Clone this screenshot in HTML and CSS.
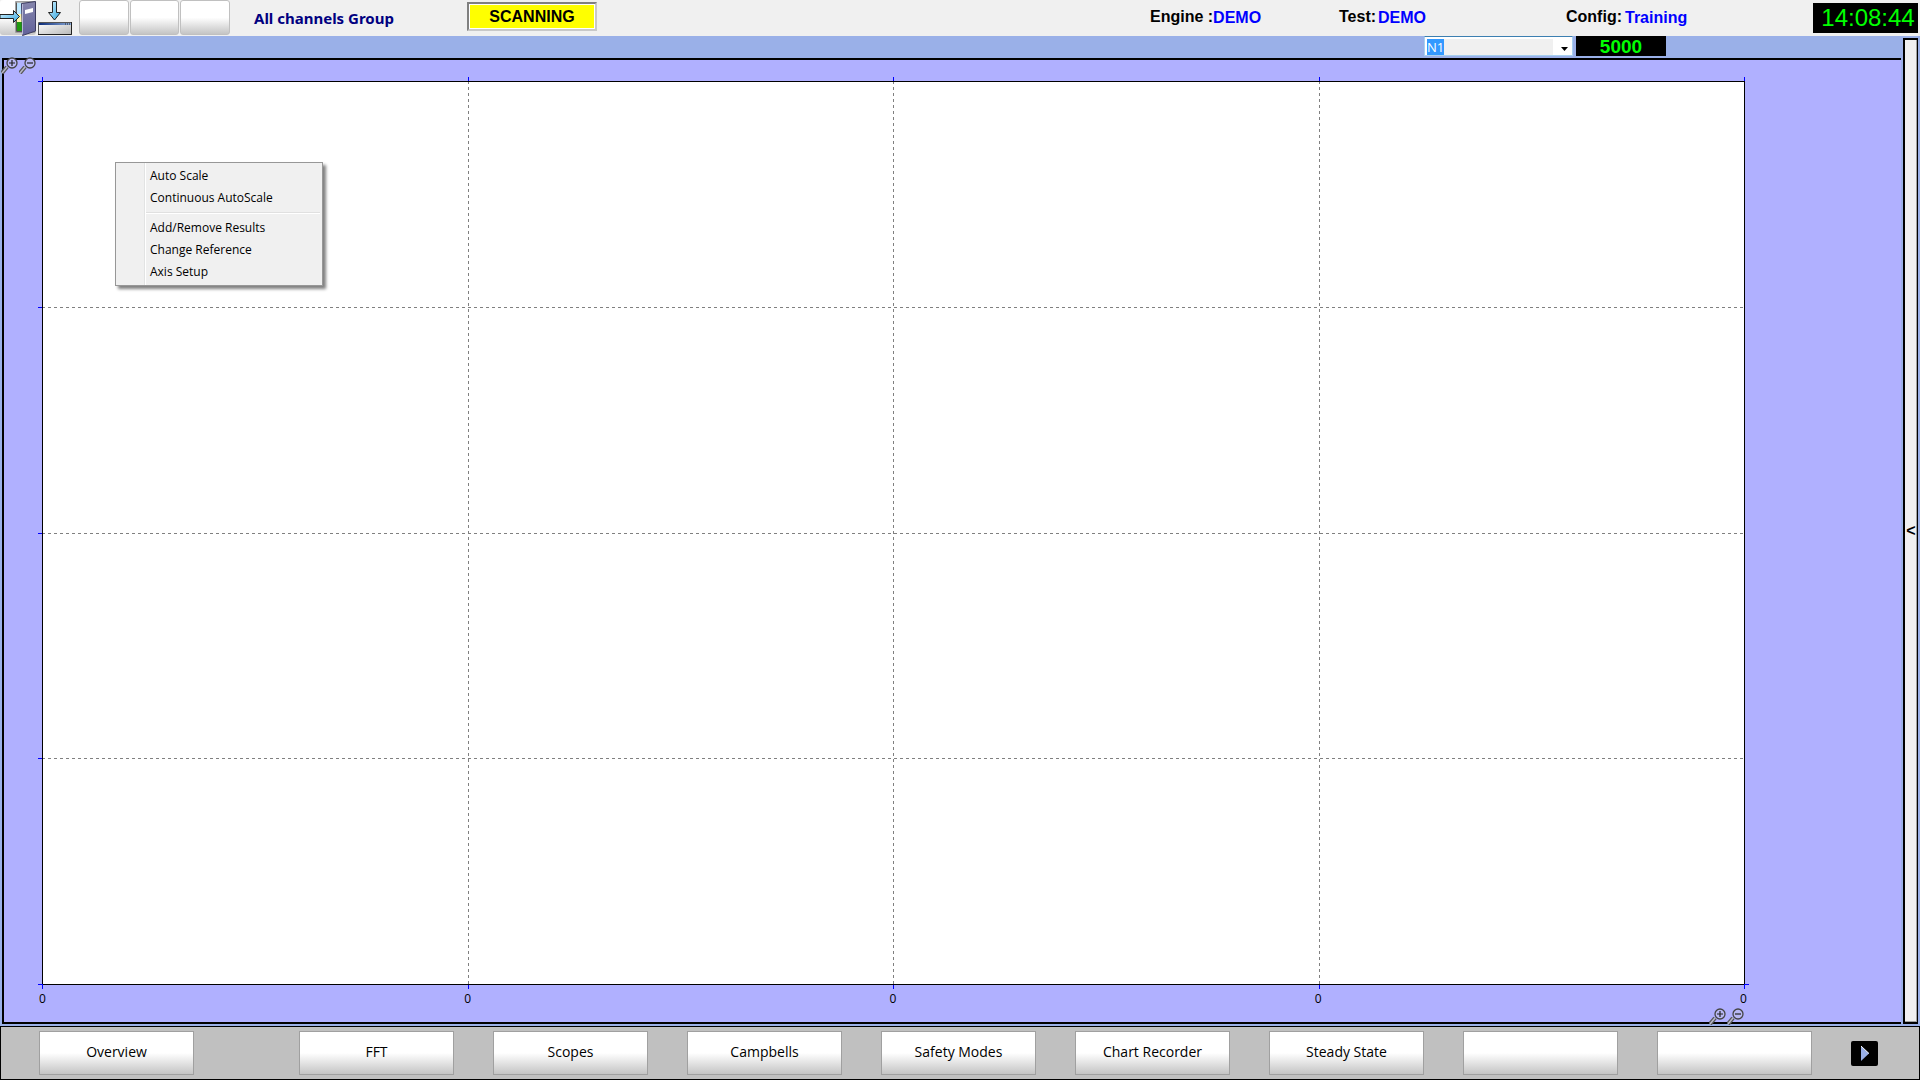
FILE: index.html
```html
<!DOCTYPE html>
<html lang="en">
<head>
<meta charset="utf-8">
<title>All channels Group</title>
<link rel="stylesheet" href="styles.css">
</head>
<body>
<svg class="defs" aria-hidden="true">
  <symbol id="zoom-in" viewBox="0 0 17 17">
    <path d="M6 10L1 16" stroke="#555" stroke-width="4"/>
    <path d="M6 10L1 16" stroke="#b8b8c8" stroke-width="1.5"/>
    <circle cx="11" cy="6" r="5" fill="#b8b8f4" stroke="#444" stroke-width="1.3"/>
    <path d="M8 6h6M11 3v6" stroke="#222" stroke-width="1.2"/>
  </symbol>
  <symbol id="zoom-out" viewBox="0 0 17 17">
    <path d="M6 10L1 16" stroke="#555" stroke-width="4"/>
    <path d="M6 10L1 16" stroke="#b8b8c8" stroke-width="1.5"/>
    <circle cx="11" cy="6" r="5" fill="#b8b8f4" stroke="#444" stroke-width="1.3"/>
    <path d="M8 6h6" stroke="#222" stroke-width="1.2"/>
  </symbol>
</svg>

<header class="topbar">
  <div class="toolbar">
    <button class="tool tool-exit" type="button" aria-label="Exit">
      <svg width="36" height="36" viewBox="0 0 36 36">
        <defs>
          <linearGradient id="door" x1="0" y1="0" x2="0" y2="1"><stop offset="0" stop-color="#8585ac"/><stop offset="1" stop-color="#62629a"/></linearGradient>
          <linearGradient id="arrow" x1="0" y1="0" x2="1" y2="1"><stop offset="0" stop-color="#d8f4ff"/><stop offset="1" stop-color="#2fa4e0"/></linearGradient>
        </defs>
        <path d="M15.500 1.500H35V32.500H15.500Z" fill="#c0c0c0" stroke="#a0a0a0"/>
        <path d="M17 3h5v14h-5z" fill="#bfeaff"/>
        <path d="M17 14h5v8h-5z" fill="#fff8b0"/>
        <path d="M17 22h5v9h-5z" fill="#219a10"/>
        <path d="M16.500 2.500V31.500H22" fill="none" stroke="#555"/>
        <path d="M21.500 3.500L35.500 1.500V31L22.500 35.500Z" fill="url(#door)" stroke="#3c3c60"/>
        <path d="M22.500 4V34.500" stroke="#b9b9d6"/>
        <path d="M25 10l8-2v4l-8 2z" fill="#fff"/>
        <path d="M0 14.500H13.500V10.500L19.500 16.500L13.500 22.500V18.500H0Z" fill="url(#arrow)" stroke="#222"/>
      </svg>
    </button>
    <button class="tool tool-dock" type="button" aria-label="Minimise">
      <svg width="34" height="36" viewBox="0 0 34 36">
        <defs>
          <linearGradient id="bar" x1="0" y1="0" x2="1" y2="0"><stop offset="0" stop-color="#0c2c78"/><stop offset="1" stop-color="#88a8d8"/></linearGradient>
          <linearGradient id="pane" x1="0" y1="0" x2="1" y2="1"><stop offset="0" stop-color="#fff"/><stop offset="1" stop-color="#b8b8b8"/></linearGradient>
        </defs>
        <path d="M14.500 1.500H18.500V12.500H22.500L16.500 20L10.500 12.500H14.500Z" fill="url(#arrow)" stroke="#222"/>
        <path d="M.5 22.500H33.500V34.500H.5Z" fill="url(#pane)" stroke="#555"/>
        <path d="M1 23h32v2H1z" fill="url(#bar)"/>
        <path d="M27 24h6" stroke="#222" stroke-dasharray="1 1"/>
        <path d="M0 34.500H33.500V22" fill="none" stroke="#222"/>
      </svg>
    </button>
    <button class="tool tool-blank" type="button" aria-label="Tool 1"></button>
    <button class="tool tool-blank" type="button" aria-label="Tool 2"></button>
    <button class="tool tool-blank" type="button" aria-label="Tool 3"></button>
  </div>
  <h1 class="title">All channels Group</h1>
  <div class="status">SCANNING</div>
  <dl class="info">
    <div class="field engine"><dt>Engine :</dt><dd>DEMO</dd></div>
    <div class="field test"><dt>Test:</dt><dd>DEMO</dd></div>
    <div class="field config"><dt>Config:</dt><dd>Training</dd></div>
  </dl>
  <time class="clock">14:08:44</time>
</header>

<main class="workspace">
  <div class="main-column">
    <div class="reference-bar">
      <div class="combo">
        <select class="combo-select" aria-label="Reference channel"><option>N1</option></select>
        <svg class="combo-arrow" width="7" height="4" viewBox="0 0 7 4"><path d="M0 0h7L3.500 4z"/></svg>
      </div>
      <output class="readout">5000</output>
    </div>
    <section class="chart">
      <div class="zoom-tools zoom-y">
        <button class="zoom" type="button" aria-label="Zoom in Y"><svg width="17" height="17"><use href="#zoom-in"/></svg></button>
        <button class="zoom" type="button" aria-label="Zoom out Y"><svg width="17" height="17"><use href="#zoom-out"/></svg></button>
      </div>
      <div class="plot">
        <svg class="grid" width="100%" height="100%">
          <defs>
            <pattern id="dash-x" width="6" height="6" patternUnits="userSpaceOnUse"><rect width="3" height="6" fill="#808080"/></pattern>
            <pattern id="dash-y" width="6" height="6" patternUnits="userSpaceOnUse"><rect width="6" height="3" fill="#808080"/></pattern>
          </defs>
          <g fill="url(#dash-x)">
            <rect x="0" y="25%" width="100%" height="1"/><rect x="0" y="50%" width="100%" height="1"/><rect x="0" y="75%" width="100%" height="1"/>
          </g>
          <g fill="url(#dash-y)">
            <rect x="25%" y="0" width="1" height="100%"/><rect x="50%" y="0" width="1" height="100%"/><rect x="75%" y="0" width="1" height="100%"/>
          </g>
          <g fill="#000">
            <rect x="0" y="0" width="100%" height="1"/><rect x="0" y="100%" width="100%" height="1"/>
            <rect x="0" y="0" width="1" height="100%"/><rect x="100%" y="0" width="1" height="100%"/>
          </g>
          <g fill="#00f">
            <svg class="ticks" y="-4"><rect x="0" width="1" height="4"/><rect x="25%" width="1" height="4"/><rect x="50%" width="1" height="4"/><rect x="75%" width="1" height="4"/><rect x="100%" width="1" height="4"/></svg>
            <svg class="ticks" y="100%"><rect x="0" width="1" height="5"/><rect x="25%" y="1" width="1" height="4"/><rect x="50%" y="1" width="1" height="4"/><rect x="75%" y="1" width="1" height="4"/><rect x="100%" width="1" height="5"/></svg>
            <svg class="ticks" x="-4"><rect y="0" width="5" height="1"/><rect y="25%" width="4" height="1"/><rect y="50%" width="4" height="1"/><rect y="75%" width="4" height="1"/><rect y="100%" width="5" height="1"/></svg>
            <svg class="ticks" x="100%"><rect y="100%" width="5" height="1"/></svg>
          </g>
        </svg>
        <menu class="context-menu">
          <li><button type="button">Auto Scale</button></li>
          <li><button type="button">Continuous AutoScale</button></li>
          <li class="separator" role="separator"></li>
          <li><button type="button">Add/Remove Results</button></li>
          <li><button type="button">Change Reference</button></li>
          <li><button type="button">Axis Setup</button></li>
        </menu>
      </div>
      <div class="axis"><span>0</span><span>0</span><span>0</span><span>0</span><span>0</span></div>
      <div class="zoom-tools zoom-x">
        <button class="zoom" type="button" aria-label="Zoom in X"><svg width="17" height="17"><use href="#zoom-in"/></svg></button>
        <button class="zoom" type="button" aria-label="Zoom out X"><svg width="17" height="17"><use href="#zoom-out"/></svg></button>
      </div>
    </section>
  </div>
  <button class="drawer" type="button">&lt;</button>
</main>

<nav class="pages">
  <button class="page overview" type="button">Overview</button>
  <button class="page" type="button">FFT</button>
  <button class="page" type="button">Scopes</button>
  <button class="page" type="button">Campbells</button>
  <button class="page" type="button">Safety Modes</button>
  <button class="page" type="button">Chart Recorder</button>
  <button class="page" type="button">Steady State</button>
  <button class="page" type="button" aria-label="Page 8"></button>
  <button class="page" type="button" aria-label="Page 9"></button>
  <button class="next" type="button" aria-label="Next">
    <svg width="8" height="15" viewBox="0 0 8 15"><path d="M0 0L8 7.500L0 15Z" fill="#9ab0e8"/><path d="M0 0L8 7.500" stroke="#fff"/></svg>
  </button>
</nav>
</body>
</html>
```
FILE: styles.css
```css
* { box-sizing: border-box; }

body {
  margin: 0;
  min-height: 100vh;
  display: flex;
  flex-direction: column;
  background: #9ab0e8;
  color: #000;
  font-family: "Liberation Sans", Arial, sans-serif;
}

button, select {
  margin: 0;
  padding: 0;
  border: 0;
  border-radius: 0;
  background: none;
  color: inherit;
  font: inherit;
}

svg { display: block; }
.defs { position: absolute; width: 0; height: 0; }

/* Top bar */
.topbar {
  display: flex;
  align-items: flex-start;
  height: 36px;
  padding-right: 2px;
  background: #f0f0f0;
}

.toolbar { display: flex; width: 230px; gap: 1px; }
.tool { height: 35px; }
.tool-exit {
  width: 36px;
  border-radius: 3px;
  background: linear-gradient(#fff 50%, #c8c8c8);
}
.tool-dock { width: 34px; margin: 0 6px 0 1px; }
.tool-blank {
  flex: 1;
  border: 1px solid #c0c0c0;
  border-radius: 3px;
  background: linear-gradient(#fff 50%, #c4c4c4);
}

.title {
  width: 213px;
  margin: 6px 0 0 24px;
  color: #000080;
  font: bold 15px/24px "Noto Sans", "Open Sans", sans-serif;
  white-space: nowrap;
}

.status {
  width: 130px;
  height: 29px;
  margin-top: 2px;
  border: 2px solid;
  border-color: #808080 #c8c8c8 #c8c8c8 #808080;
  outline: 1px solid #fff;
  outline-offset: -3px;
  background: #ff0;
  font-weight: bold;
  font-size: 16px;
  line-height: 25px;
  text-align: center;
}

.info {
  display: flex;
  justify-content: flex-end;
  flex: 1;
  margin: 0;
  padding-top: 6px;
  font-weight: bold;
  font-size: 16px;
  line-height: 22px;
}
.field { display: flex; white-space: nowrap; }
.field dd { margin: 0; padding-top: 1px; color: #00f; }
.engine { width: 189px; }
.test { width: 227px; gap: 2px; }
.config { width: 247px; gap: 3px; }

.clock {
  width: 105px;
  height: 30px;
  margin-top: 3px;
  padding-left: 5px;
  background: #000;
  color: #0f0;
  font-size: 24px;
  line-height: 30px;
  text-align: center;
}

/* Work area */
.workspace {
  flex: 1;
  display: flex;
  gap: 2px;
  padding: 0 2px 2px;
}
.main-column {
  flex: 1;
  display: flex;
  flex-direction: column;
}

.reference-bar {
  display: flex;
  justify-content: flex-end;
  gap: 3px;
  height: 22px;
  padding: 0 235px 2px 0;
}
.combo {
  display: grid;
  width: 149px;
  border: 1px solid #a8d0f0;
  border-top-color: #3c7fb1;
  background: #fff;
}
.combo-select, .combo-arrow { grid-area: 1 / 1; }
.combo-select {
  appearance: none;
  margin: 2px 19px 0 2px;
  background: linear-gradient(#39f, #39f) 0 0 / 17px 16px no-repeat #f0f0f0;
  color: #fff;
  font: 13px/16px "Open Sans", "Noto Sans", sans-serif;
}
.combo-arrow { align-self: center; justify-self: end; margin: 5px 4px 0 0; }
.readout {
  width: 90px;
  background: #000;
  color: #0f0;
  font-weight: bold;
  font-size: 19px;
  line-height: 22px;
  text-align: center;
}

.chart {
  flex: 1;
  position: relative;
  display: flex;
  flex-direction: column;
  padding: 21px 157px 0 38px;
  border: 2px solid #000;
  border-right: 0;
  background: #b0b0ff;
}
.plot {
  flex: 1;
  position: relative;
  background: #fff;
}
.grid { position: absolute; inset: 0; overflow: visible; shape-rendering: crispEdges; }
.ticks { overflow: visible; }

.axis {
  display: flex;
  justify-content: space-between;
  height: 38px;
  margin: 0 -10px;
  padding-top: 7px;
  font: 12px/16px "Open Sans", "Noto Sans", sans-serif;
}
.axis span { width: 21px; text-align: center; }

.zoom-tools { position: absolute; display: flex; gap: 1px; }
.zoom-y { top: -3px; left: -3px; }
.zoom-x { right: 157px; bottom: -3px; }

.context-menu {
  position: absolute;
  top: 81px;
  left: 73px;
  width: 208px;
  margin: 0;
  padding: 2px;
  border: 1px solid #979797;
  box-shadow: 3px 3px 3px #808080;
  background:
    linear-gradient(#e2e3e3, #e2e3e3) 28px 0 / 1px 100% no-repeat,
    linear-gradient(#fff, #fff) 29px 0 / 1px 100% no-repeat,
    #f0f0f0;
  font: 12px/22px "Open Sans", "Noto Sans", sans-serif;
  list-style: none;
}
.context-menu button {
  display: block;
  width: 100%;
  padding-left: 32px;
  text-align: left;
}
.separator {
  height: 2px;
  margin: 3px 0 3px 28px;
  border-top: 1px solid #e0e0e0;
  border-bottom: 1px solid #fff;
}

.drawer {
  width: 15px;
  margin-top: 2px;
  border: 2px solid #000;
  border-right-width: 1px;
  box-shadow: inset -1px -1px #a0a0a0;
  background: #f0f0f0;
  font-weight: bold;
  font-size: 16px;
}

/* Page buttons */
.pages {
  display: flex;
  align-items: center;
  gap: 39px;
  height: 54px;
  padding: 0 41px 0 38px;
  border: 1px solid #000;
  background: #c0c0c0;
}
.page {
  flex: 1;
  height: 44px;
  padding-bottom: 2px;
  border: 1px solid #a0a0a0;
  background: linear-gradient(#fff 50%, #c4c4c4);
  font: 14px/24px "Open Sans", "Noto Sans", sans-serif;
}
.overview { margin-right: 66px; }
.next {
  display: grid;
  place-items: center;
  width: 27px;
  height: 25px;
  border-radius: 2px;
  background: #000;
}
```
